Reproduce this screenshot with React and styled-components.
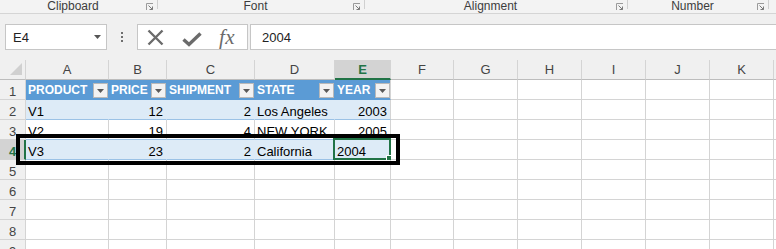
import React from 'react';
import styled, { createGlobalStyle } from 'styled-components';

const Global = createGlobalStyle`
  html, body { margin: 0; padding: 0; background: #fff; }
  body { font-family: "Liberation Sans", Arial, sans-serif; }
`;

const Window = styled.div`
  position: relative;
  width: 776px;
  height: 249px;
  overflow: hidden;
  background: #f0f0f0;
  display: flex;
  flex-direction: column;
`;

/* ---------- Ribbon group labels ---------- */
const RibbonGroups = styled.div`
  display: flex;
  height: 13px;
  flex: none;
  border-bottom: 1px solid #d5d5d5;
  background: #f3f3f3;
`;
const Group = styled.div`
  width: ${p => p.$w}px;
  flex: none;
  display: flex;
  align-items: flex-start;
`;
const GroupLabel = styled.div`
  flex: 1;
  text-align: center;
  font-size: 12px;
  line-height: 12px;
  color: #3c3c3c;
`;
const LauncherWrap = styled.div`
  width: 8px;
  height: 8px;
  margin: 3px 3px 0 0;
  display: flex;
`;
const GroupSep = styled.div`
  width: 1px;
  height: 9px;
  flex: none;
  background: #d0d0d0;
`;
const Launcher = () => (
  <LauncherWrap>
    <svg width="8" height="8" viewBox="0 0 8 8">
      <path d="M0.5 7 V0.5 H7" fill="none" stroke="#9a9a9a" strokeWidth="1" />
      <path d="M2.5 2.5 L6.5 6.5 M6.5 3.5 V6.5 H3.5" fill="none" stroke="#7a7a7a" strokeWidth="1" />
    </svg>
  </LauncherWrap>
);

const Band = styled.div`
  height: 10px;
  flex: none;
`;

/* ---------- Formula bar ---------- */
const FormulaBar = styled.div`
  display: flex;
  height: 26px;
  flex: none;
  padding-left: 5px;
`;
const NameBox = styled.div`
  box-sizing: border-box;
  width: 102px;
  flex: none;
  background: #fff;
  border: 1px solid #c6c6c6;
  display: flex;
  align-items: center;
  justify-content: space-between;
  padding: 0 5px 0 7px;
  font-size: 13px;
  color: #222;
`;
const Dots = styled.div`
  width: 30px;
  flex: none;
  display: flex;
  flex-direction: column;
  align-items: center;
  justify-content: center;
  gap: 2px;
`;
const Dot = styled.span`
  width: 2px;
  height: 2px;
  background: #6e6e6e;
`;
const FxBox = styled.div`
  box-sizing: border-box;
  width: 111px;
  flex: none;
  background: #fff;
  border: 1px solid #c6c6c6;
  display: flex;
  align-items: center;
  padding-left: 9px;
  gap: 18px;
`;
const FxText = styled.span`
  font-family: "Liberation Serif", "Times New Roman", serif;
  font-style: italic;
  font-size: 21px;
  line-height: 22px;
  color: #6b6b6b;
  margin-left: -1px;
  letter-spacing: 0.5px;
`;
const FormulaInput = styled.div`
  box-sizing: border-box;
  flex: 1;
  margin-left: 2px;
  background: #fff;
  border: 1px solid #c6c6c6;
  border-right: none;
  display: flex;
  align-items: center;
  padding-left: 11px;
  font-size: 13px;
  color: #222;
`;

const Gap = styled.div`
  height: 10px;
  flex: none;
`;

/* ---------- Sheet ---------- */
const COLS = [26, 83, 58, 88, 80, 56, 63, 64, 64, 64, 64, 64];
const Sheet = styled.div`
  display: grid;
  grid-template-columns: ${COLS.map(c => c + 'px').join(' ')} 1fr;
  grid-auto-rows: 20px;
  font-size: 13px;
`;

const Corner = styled.div`
  box-sizing: border-box;
  background: #f0f0f0;
  border-right: 1px solid #d4d4d4;
  border-bottom: 1px solid #bdbdbd;
  display: flex;
  align-items: flex-end;
  justify-content: flex-end;
  padding: 0 3px 4px 0;
`;

const ColHead = styled.div`
  box-sizing: border-box;
  background: ${p => (p.$sel ? '#d3d3d3' : '#f0f0f0')};
  border-right: 1px solid #d4d4d4;
  border-bottom: ${p => (p.$sel ? '2px solid #217346' : '1px solid #bdbdbd')};
  display: flex;
  align-items: center;
  justify-content: center;
  line-height: 15px;
  padding-top: ${p => (p.$sel ? '1px' : '0')};
  color: ${p => (p.$sel ? '#217346' : '#444')};
  font-weight: ${p => (p.$sel ? 700 : 400)};
`;

const RowHead = styled.div`
  box-sizing: border-box;
  background: ${p => (p.$sel ? '#d3d3d3' : '#f0f0f0')};
  border-right: ${p => (p.$sel ? '2px solid #217346' : '1px solid #d4d4d4')};
  border-bottom: 1px solid #d4d4d4;
  display: flex;
  align-items: flex-end;
  justify-content: center;
  line-height: 15px;
  padding-left: ${p => (p.$sel ? '1px' : '0')};
  color: ${p => (p.$sel ? '#217346' : '#444')};
  font-weight: ${p => (p.$sel ? 700 : 400)};
`;

const Cell = styled.div`
  box-sizing: border-box;
  position: relative;
  display: flex;
  align-items: flex-end;
  justify-content: ${p => (p.$right ? 'flex-end' : 'flex-start')};
  padding: ${p => (p.$right ? '0 3px 0 0' : '0 0 0 2px')};
  background: ${p => p.$bg || '#fff'};
  border-right: 1px solid ${p => p.$vline || '#d4d4d4'};
  border-bottom: 1px solid ${p => p.$hline || '#d4d4d4'};
  line-height: 15px;
  font-size: ${p => (p.$bold ? '12px' : '13px')};
  color: ${p => p.$fg || '#000'};
  font-weight: ${p => (p.$bold ? 700 : 400)};
  white-space: nowrap;
`;

const CellText = styled.span`
  flex: none;
  padding-bottom: ${p => (p.$head ? '1px' : '0')};
`;

const FilterButton = styled.div`
  box-sizing: border-box;
  width: 15px;
  height: 15px;
  flex: none;
  margin-left: auto;
  align-self: flex-end;
  margin-bottom: 1px;
  background: #f2f2f2;
  border: 1px solid #b9b9b9;
  display: flex;
  align-items: center;
  justify-content: center;
`;

const Selection = styled.div`
  position: absolute;
  top: -2px;
  left: -2px;
  right: -1px;
  bottom: -1px;
  border: 2px solid #217346;
  pointer-events: none;
`;
const FillHandle = styled.div`
  position: absolute;
  right: -4px;
  bottom: -4px;
  width: 5px;
  height: 5px;
  background: #217346;
  border: 1px solid #fff;
`;

const Annotation = styled.div`
  position: absolute;
  left: 16px;
  top: 134px;
  width: 384px;
  height: 31px;
  box-sizing: border-box;
  border: 4px solid #000;
  pointer-events: none;
`;

const DownTri = ({ color = '#595959' }) => (
  <svg width="7" height="4" viewBox="0 0 7 4">
    <polygon points="0,0 7,0 3.5,4" fill={color} />
  </svg>
);

const LETTERS = ['A', 'B', 'C', 'D', 'E', 'F', 'G', 'H', 'I', 'J', 'K', ''];

const TABLE = [
  ['PRODUCT', 'PRICE', 'SHIPMENT', 'STATE', 'YEAR'],
  ['V1', '12', '2', 'Los Angeles', '2003'],
  ['V2', '19', '4', 'NEW YORK', '2005'],
  ['V3', '23', '2', 'California', '2004'],
];
const NUMERIC = [false, true, true, false, true];

const BLUE = '#5b9bd5';
const BAND = '#ddebf7';
const TLINE = '#9bc2e6';

function rowStyle(r) {
  if (r === 0) return { bg: BLUE, vline: BLUE, hline: BLUE };
  if (r % 2 === 1) return { bg: BAND, vline: BAND, hline: TLINE };
  return { bg: '#fff', vline: '#d4d4d4', hline: TLINE };
}

function SheetRow({ r }) {
  const cells = [];
  for (let c = 0; c < LETTERS.length; c++) {
    const key = `${r}-${c}`;
    if (r < TABLE.length && c < 5) {
      const s = rowStyle(r);
      const vline = c === 4 ? '#d4d4d4' : s.vline;
      const val = TABLE[r][c];
      if (r === 0) {
        cells.push(
          <Cell key={key} $bg={s.bg} $vline={vline} $hline={s.hline} $fg="#fff" $bold>
            <CellText $head>{val}</CellText>
            <FilterButton>
              <DownTri />
            </FilterButton>
          </Cell>
        );
      } else {
        const selected = r === 3 && c === 4;
        const right = NUMERIC[c] && !selected;
        cells.push(
          <Cell key={key} $bg={s.bg} $vline={vline} $hline={s.hline} $right={right}>
            <CellText>{val}</CellText>
            {selected && (
              <Selection>
                <FillHandle />
              </Selection>
            )}
          </Cell>
        );
      }
    } else {
      cells.push(<Cell key={key} />);
    }
  }
  return (
    <>
      <RowHead $sel={r === 3}>{r + 1}</RowHead>
      {cells}
    </>
  );
}

export default function App() {
  return (
    <>
      <Global />
      <Window>
        <RibbonGroups>
          <Group $w={157}>
            <GroupLabel>Clipboard</GroupLabel>
            <Launcher />
          </Group>
          <GroupSep />
          <Group $w={206}>
            <GroupLabel>Font</GroupLabel>
            <Launcher />
          </Group>
          <GroupSep />
          <Group $w={262}>
            <GroupLabel>Alignment</GroupLabel>
            <Launcher />
          </Group>
          <GroupSep />
          <Group $w={140}>
            <GroupLabel>Number</GroupLabel>
            <Launcher />
          </Group>
          <GroupSep />
        </RibbonGroups>
        <Band />
        <FormulaBar>
          <NameBox>
            <span>E4</span>
            <DownTri color="#555" />
          </NameBox>
          <Dots>
            <Dot />
            <Dot />
            <Dot />
          </Dots>
          <FxBox>
            <svg width="17" height="17" viewBox="0 0 17 17">
              <path d="M1.5 1.5 L15.5 15.5 M15.5 1.5 L1.5 15.5" stroke="#6b6b6b" strokeWidth="2.4" fill="none" />
            </svg>
            <svg width="20" height="15" viewBox="0 0 20 15" style={{ marginTop: 4 }}>
              <path d="M1.5 7.5 L7 12.5 L18.5 1.5" stroke="#6b6b6b" strokeWidth="3.4" fill="none" strokeLinejoin="miter" />
            </svg>
            <FxText>fx</FxText>
          </FxBox>
          <FormulaInput>2004</FormulaInput>
        </FormulaBar>
        <Gap />
        <Sheet>
          <Corner>
            <svg width="12" height="12" viewBox="0 0 12 12">
              <polygon points="12,0 12,12 0,12" fill="#d0d0d0" />
            </svg>
          </Corner>
          {LETTERS.map((l, i) => (
            <ColHead key={i} $sel={l === 'E'}>
              {l}
            </ColHead>
          ))}
          {Array.from({ length: 9 }, (_, r) => (
            <SheetRow key={r} r={r} />
          ))}
        </Sheet>
        <Annotation />
      </Window>
    </>
  );
}
